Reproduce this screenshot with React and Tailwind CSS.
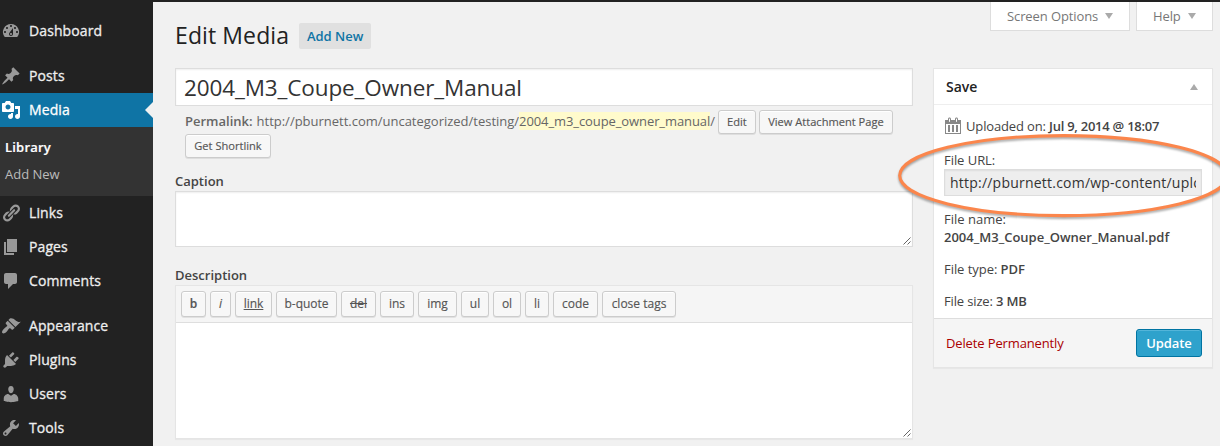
const ICONS = {
  dashboard:
    "M3.76 16h12.48A7.998 7.998 0 0 0 10 3a7.998 7.998 0 0 0-6.24 13zM10 4c.55 0 1 .45 1 1s-.45 1-1 1-1-.45-1-1 .45-1 1-1zM6 6c.55 0 1 .45 1 1s-.45 1-1 1-1-.45-1-1 .45-1 1-1zm8 0c.55 0 1 .45 1 1s-.45 1-1 1-1-.45-1-1 .45-1 1-1zm-5.37 5.55L12 7v6c0 1.1-.9 2-2 2s-2-.9-2-2c0-.57.24-1.08.63-1.45zM4 10c.55 0 1 .45 1 1s-.45 1-1 1-1-.45-1-1 .45-1 1-1zm12 0c.55 0 1 .45 1 1s-.45 1-1 1-1-.45-1-1 .45-1 1-1zm-5 3c0-.55-.45-1-1-1s-1 .45-1 1 .45 1 1 1 1-.45 1-1z",
  post: "M10.44 3.02l1.82-1.82 6.36 6.35-1.83 1.82c-1.05-.68-2.48-.57-3.41.36l-.75.75c-.92.93-1.04 2.35-.35 3.41l-1.83 1.82-2.41-2.41-2.8 2.79c-.42.42-3.38 2.71-3.8 2.29s1.86-3.39 2.28-3.81l2.79-2.79L4.1 9.36l1.83-1.82c1.05.69 2.48.57 3.4-.36l.75-.75c.93-.92 1.05-2.35.36-3.41z",
  media:
    "M13 11V4c0-.55-.45-1-1-1h-1.67L9 1H5L3.67 3H2c-.55 0-1 .45-1 1v7c0 .55.45 1 1 1h10c.55 0 1-.45 1-1zM7 4.5c1.38 0 2.5 1.12 2.5 2.5S8.38 9.5 7 9.5 4.5 8.38 4.5 7 5.62 4.5 7 4.5zM14 6h5v10.5c0 1.38-1.12 2.5-2.5 2.5S14 17.88 14 16.5s1.12-2.5 2.5-2.5c.17 0 .34.02.5.05V9h-3V6zm-4 8.05V13h2v3.5c0 1.38-1.12 2.5-2.5 2.5S7 17.88 7 16.5 8.12 14 9.5 14c.17 0 .34.02.5.05z",
  links:
    "M17.74 2.76c1.68 1.69 1.68 4.41 0 6.1l-1.53 1.52c-1.12 1.12-2.7 1.47-4.14 1.09l2.62-2.61.76-.77.76-.76c.84-.84.84-2.2 0-3.04-.84-.85-2.2-.85-3.04 0l-.77.76-3.38 3.38c-.37-1.44-.02-3.02 1.1-4.14l1.52-1.53c1.69-1.68 4.42-1.68 6.1 0zM8.59 13.43l5.34-5.34c.42-.42.42-1.1 0-1.52-.44-.43-1.13-.39-1.53 0l-5.33 5.34c-.42.42-.42 1.1 0 1.52.44.43 1.13.39 1.52 0zm-.76 2.29l4.14-4.15c.38 1.44.03 3.02-1.09 4.14l-1.52 1.53c-1.69 1.68-4.41 1.68-6.1 0-1.68-1.68-1.68-4.42 0-6.1l1.53-1.52c1.12-1.12 2.7-1.47 4.14-1.1l-4.14 4.15c-.85.84-.85 2.2 0 3.05.84.84 2.2.84 3.04 0z",
  page: "M6 15V2h10v13H6zm-1 1h8v2H3V5h2v11z",
  comments:
    "M5 2h9c1.1 0 2 .9 2 2v7c0 1.1-.9 2-2 2h-2l-5 5v-5H5c-1.1 0-2-.9-2-2V4c0-1.1.9-2 2-2z",
  appearance:
    "M14.48 11.06L7.41 3.99l1.5-1.5c.5-.56 2.3-.47 3.51.32 1.21.8 1.43 1.28 2.91 2.1 1.18.64 2.45 1.26 4.45.85zm-.71.71L6.7 4.7 4.93 6.47c-.39.39-.39 1.02 0 1.41l1.06 1.06c.39.39.39 1.03 0 1.42-.6.6-1.43 1.11-2.21 1.69-.35.26-.7.53-1.01.84C1.43 14.23.4 16.08 1.4 17.07c.99 1 2.84-.03 4.18-1.36.31-.31.58-.66.85-1.02.57-.78 1.08-1.61 1.69-2.21.39-.39 1.02-.39 1.41 0l1.06 1.06c.39.39 1.02.39 1.41 0z",
  plugins:
    "M13.11 4.36L9.87 7.6 8 5.73l3.24-3.24c.35-.34 1.05-.2 1.56.32.52.51.66 1.21.31 1.55zm-8 1.77l.91-1.12 9.01 9.01-1.19.84c-.71.71-2.63 1.16-3.82 1.16H6.14L4.9 17.26c-.59.59-1.54.59-2.12 0-.59-.58-.59-1.53 0-2.12l1.24-1.24v-3.88c0-1.13.4-3.19 1.09-3.89zm7.26 3.97l3.24-3.24c.34-.35 1.04-.21 1.55.31.52.51.66 1.21.31 1.55l-3.24 3.25z",
  users:
    "M10 9.25c-2.27 0-2.73-3.44-2.73-3.44C7 4.02 7.82 2 9.97 2c2.16 0 2.98 2.02 2.71 3.81 0 0-.41 3.44-2.68 3.44zm0 2.57L12.72 10c2.39 0 4.52 2.33 4.52 4.53v2.49s-3.65 1.13-7.24 1.13c-3.65 0-7.24-1.13-7.24-1.13v-2.49c0-2.25 1.94-4.48 4.47-4.48z",
  tools:
    "M16.68 9.77c-1.34 1.34-3.3 1.67-4.95.99l-5.41 6.52c-.99.99-2.59.99-3.58 0s-.99-2.59 0-3.57l6.52-5.42c-.68-1.65-.35-3.61.99-4.95 1.28-1.28 3.12-1.62 4.72-1.06l-2.89 2.89 2.82 2.82 2.86-2.87c.53 1.58.18 3.39-1.08 4.65zM3.81 16.21c.4.39 1.04.39 1.43 0 .4-.4.4-1.04 0-1.43-.39-.4-1.03-.4-1.43 0-.39.39-.39 1.03 0 1.43z",
  calendar:
    "M15 4h3v14H2V4h3V3c0-.83.67-1.5 1.5-1.5S8 2.17 8 3v1h4V3c0-.83.67-1.5 1.5-1.5S15 2.17 15 3v1zM6 3v2.5c0 .28.22.5.5.5s.5-.22.5-.5V3c0-.28-.22-.5-.5-.5S6 2.72 6 3zm7 0v2.5c0 .28.22.5.5.5s.5-.22.5-.5V3c0-.28-.22-.5-.5-.5s-.5.22-.5.5zm4 14V8H3v9h14zM7 16V9H5v7h2zm4 0V9H9v7h2zm4 0V9h-2v7h2z",
};

function Icon({ name, className }) {
  return (
    <svg viewBox="0 0 20 20" className={`size-5 shrink-0 fill-current ${className || ""}`} aria-hidden="true">
      <path d={ICONS[name]} />
    </svg>
  );
}

function MenuItem({ icon, label, active }) {
  return (
    <a
      className={`flex h-[34px] shrink-0 items-center pl-px text-[14px] font-medium ${
        active ? "relative bg-[#0f74a5] text-white" : "text-[#eee]"
      }`}
    >
      <Icon name={icon} className={active ? "text-white" : "text-[#999]"} />
      <span className="ml-2 pb-0.5 tracking-[0.1px] [-webkit-text-stroke:0.3px_currentColor]">{label}</span>
      {active && (
        <span className="absolute right-0 top-[9px] border-y-8 border-r-8 border-y-transparent border-r-[#f1f1f1]" />
      )}
    </a>
  );
}

function Sidebar() {
  return (
    <nav className="flex h-full w-[153px] shrink-0 flex-col bg-[#222] pt-3.5">
      <MenuItem icon="dashboard" label="Dashboard" />
      <div className="h-[11px] shrink-0" />
      <MenuItem icon="post" label="Posts" />
      <MenuItem icon="media" label="Media" active />
      <div className="flex h-[69px] shrink-0 flex-col bg-[#333] pl-[5px] pt-[7px] text-[13px]">
        <a className="h-[27px] font-semibold leading-[27px] tracking-[0.2px] text-white [-webkit-text-stroke:0.2px_currentColor]">
          Library
        </a>
        <a className="h-[27px] leading-[27px] text-[#bbb]">Add New</a>
      </div>
      <MenuItem icon="links" label="Links" />
      <MenuItem icon="page" label="Pages" />
      <MenuItem icon="comments" label="Comments" />
      <div className="h-[11px] shrink-0" />
      <MenuItem icon="appearance" label="Appearance" />
      <MenuItem icon="plugins" label="Plugins" />
      <MenuItem icon="users" label="Users" />
      <MenuItem icon="tools" label="Tools" />
    </nav>
  );
}

function SmallButton({ className, children }) {
  return (
    <button
      className={`flex h-6 shrink-0 items-center justify-center whitespace-nowrap rounded-[3px] border border-[#ccc] bg-[#f7f7f7] text-[11.1px] text-[#555] shadow-[inset_0_1px_0_#fff,0_1px_0_rgba(0,0,0,0.08)] [-webkit-text-stroke:0.15px_currentColor] ${className}`}
    >
      {children}
    </button>
  );
}

const QUICKTAGS = [
  ["b", "w-[25px] font-semibold"],
  ["i", "w-[21px] italic"],
  ["link", "w-[37px] underline"],
  ["b-quote", "w-[61px]"],
  ["del", "w-[35px] line-through"],
  ["ins", "w-[34px]"],
  ["img", "w-[39px]"],
  ["ul", "w-[28px]"],
  ["ol", "w-[28px]"],
  ["li", "w-[24px]"],
  ["code", "w-[45px]"],
  ["close tags", "w-[74px]"],
];

function ResizeGrip() {
  return (
    <svg className="absolute bottom-px right-px size-2" viewBox="0 0 8 8" aria-hidden="true">
      <path d="M0.5 7.5L7.5 0.5M4.5 7.5L7.5 4.5" stroke="#555" strokeWidth="0.9" fill="none" />
    </svg>
  );
}

function Editor() {
  return (
    <section className="flex w-[738px] shrink-0 flex-col">
      <input
        readOnly
        defaultValue="2004_M3_Coupe_Owner_Manual"
        className="h-[38px] w-full border border-[#ddd] bg-white px-2 pt-px text-[22.5px] tracking-[-0.12px] text-[#333] shadow-[inset_0_1px_2px_rgba(0,0,0,0.07)] outline-none"
      />
      <div className="mt-1 flex h-6 items-center pl-2.5 text-[13px] text-[#666]">
        <strong className="font-semibold">Permalink:</strong>
        <span className="ml-1 whitespace-nowrap tracking-[-0.01px]">
          http://pburnett.com/uncategorized/testing/
          <span className="bg-[#fffbcc] tracking-[-0.09px]">2004_m3_coupe_owner_manual</span>/
        </span>
        <SmallButton className="ml-[3px] w-[38px]">Edit</SmallButton>
        <SmallButton className="ml-[3px] w-[134px]">View Attachment Page</SmallButton>
      </div>
      <div className="flex h-6 pl-2.5">
        <SmallButton className="w-[86px]">Get Shortlink</SmallButton>
      </div>
      <label className="mt-[14px] h-[19px] text-[13px] font-semibold leading-[19px] text-[#444]">Caption</label>
      <div className="relative h-[56px] border border-[#ddd] bg-white shadow-[inset_0_1px_2px_rgba(0,0,0,0.07)]">
        <ResizeGrip />
      </div>
      <label className="mt-[19px] h-[19px] text-[13px] font-semibold leading-[19px] text-[#444]">Description</label>
      <div className="h-[154px] border border-[#e5e5e5] bg-white shadow-[0_1px_1px_rgba(0,0,0,0.04)]">
        <div className="flex h-[37px] gap-1 border-b border-[#dedede] bg-[#f5f5f5] pl-[5px] pt-[5px]">
          {QUICKTAGS.map(([label, style]) => (
            <SmallButton key={label} className={`!h-[26px] !text-[12px] ${style}`}>
              {label}
            </SmallButton>
          ))}
        </div>
        <div className="relative h-[115px]">
          <ResizeGrip />
        </div>
      </div>
    </section>
  );
}

function SaveBox() {
  return (
    <aside className="flex h-[300px] w-[280px] shrink-0 flex-col border border-[#e5e5e5] bg-white text-[13px] text-[#444] shadow-[0_1px_1px_rgba(0,0,0,0.04)]">
      <header className="flex h-9 shrink-0 items-center justify-between border-b border-[#eee] pl-3 pr-3.5">
        <h3 className="text-[14px] font-semibold text-[#222]">Save</h3>
        <span className="border-x-4 border-b-[6px] border-x-transparent border-b-[#aaa]" />
      </header>
      <div className="flex flex-1 flex-col pl-2.5 leading-[18px]">
        <div className="mt-3 flex h-5 items-center">
          <Icon name="calendar" className="-ml-px mb-0.5 text-[#888]" />
          <span className="ml-[3px] whitespace-nowrap pb-0.5 tracking-[-0.15px]">
            Uploaded on: <b className="font-semibold tracking-[-0.25px]">Jul 9, 2014 @ 18:07</b>
          </span>
        </div>
        <label className="mt-[14px] tracking-[-0.05px]">File URL:</label>
        <div className="h-[27px] w-[258px] border border-[#ddd] bg-[#eee] px-[5px] shadow-[inset_0_1px_2px_rgba(0,0,0,0.07)]">
          <div className="overflow-hidden whitespace-nowrap text-[14px] leading-[25px] tracking-[0.22px] text-[#333]">
            http://pburnett.com/wp-content/uploads
          </div>
        </div>
        <p className="mt-[14px]">
          File name:
          <br />
          <b className="font-semibold">2004_M3_Coupe_Owner_Manual.pdf</b>
        </p>
        <p className="mt-[14px] tracking-[-0.05px]">
          File type: <b className="font-semibold">PDF</b>
        </p>
        <p className="mt-[14px] tracking-[-0.15px]">
          File size: <b className="font-semibold">3 MB</b>
        </p>
      </div>
      <footer className="flex h-[49px] shrink-0 items-center justify-between border-t border-[#ddd] bg-[#f5f5f5] pl-3 pr-2.5">
        <a className="pt-0.5 tracking-[-0.13px] text-[#a00]">Delete Permanently</a>
        <button className="h-7 w-[66px] rounded-[3px] border border-[#0074a2] bg-[#2ea2cc] pt-px text-[13px] font-semibold tracking-[-0.1px] text-white shadow-[inset_0_1px_0_rgba(120,200,230,0.5)]">
          Update
        </button>
      </footer>
    </aside>
  );
}

function ScreenTab({ label, className }) {
  return (
    <a
      className={`flex h-[29px] items-center border border-t-0 border-[#ddd] bg-white pl-4 text-[13px] text-[#777] ${className}`}
    >
      <span className="pt-0.5 tracking-[-0.1px]">{label}</span>
      <span className="ml-[7px] border-x-4 border-t-[6px] border-x-transparent border-t-[#aaa]" />
    </a>
  );
}

export default function App() {
  return (
    <div className="relative flex h-[446px] w-[1220px] overflow-hidden bg-[#f1f1f1] font-['Open_Sans',sans-serif]">
      <Sidebar />
      <div className="flex flex-1 flex-col border-t-2 border-[#222]">
        <div className="flex h-[66px] shrink-0 justify-between pl-[22px] pr-[7px]">
          <div className="flex h-[68px] items-center">
            <h1 className="pb-0.5 text-[23px] tracking-[0.1px] text-[#222]">Edit Media</h1>
            <a className="ml-2.5 flex h-[26px] w-[72px] items-center justify-center rounded-[2px] bg-[#e0e0e0] pt-0.5 text-[13px] font-semibold text-[#0f74a5]">
              Add New
            </a>
          </div>
          <div className="flex gap-[6px]">
            <ScreenTab label="Screen Options" className="w-[140px]" />
            <ScreenTab label="Help" className="w-[77px]" />
          </div>
        </div>
        <main className="flex gap-5 pl-[22px]">
          <Editor />
          <SaveBox />
        </main>
      </div>
      <svg className="pointer-events-none absolute left-0 top-0 h-[446px] w-[1220px]" viewBox="0 0 1220 446" aria-hidden="true">
        <g fill="none">
          <ellipse cx="1063.5" cy="177.5" rx="163.8" ry="40" stroke="#000" strokeOpacity="0.35" strokeWidth="2.8" className="blur-[1px]" />
          <ellipse cx="1063.5" cy="175.6" rx="163.8" ry="40" stroke="#fb864c" strokeWidth="3.1" />
        </g>
      </svg>
    </div>
  );
}
